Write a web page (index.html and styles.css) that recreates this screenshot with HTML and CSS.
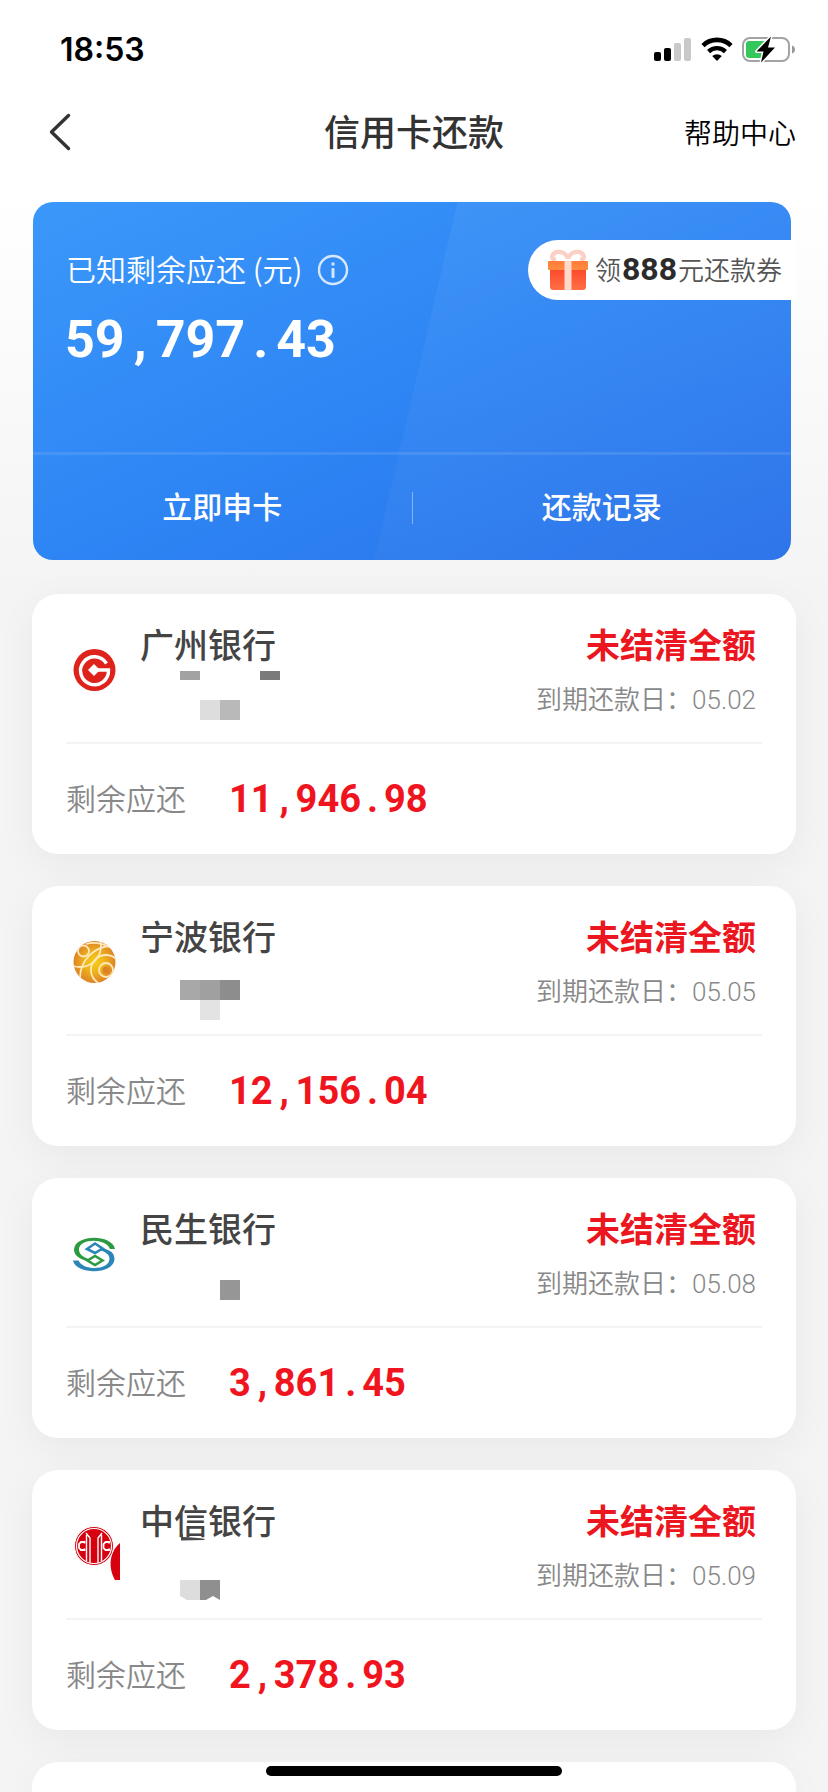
FILE: index.html
```html
<!DOCTYPE html>
<html lang="zh-CN">
<head>
<meta charset="utf-8">
<meta name="viewport" content="width=device-width, initial-scale=1">
<title>信用卡还款</title>
<link rel="stylesheet" href="styles.css">
</head>
<body>
<div class="page">
  <div class="status">
    <span class="status-time">18:53</span>
    <div class="status-icons">
      <svg width="38" height="26" viewBox="0 0 38 26" aria-hidden="true">
        <rect x="0" y="15" width="7" height="9" rx="2"/>
        <rect x="10" y="11" width="7" height="13" rx="2"/>
        <rect x="20" y="6" width="7" height="18" rx="2" fill="#c9c9c9"/>
        <rect x="30" y="1" width="7" height="23" rx="2" fill="#c9c9c9"/>
      </svg>
      <svg width="32" height="26" viewBox="0 0 32 26" aria-hidden="true">
        <path d="M2 8.6a20 20 0 0 1 28 0" fill="none" stroke="#000" stroke-width="4.6"/>
        <path d="M7.6 14.6a12 12 0 0 1 16.8 0" fill="none" stroke="#000" stroke-width="4.4"/>
        <path d="M16 24l-4.8-4.9a7 7 0 0 1 9.6 0z"/>
      </svg>
      <svg width="54" height="28" viewBox="0 0 54 28" aria-hidden="true">
        <rect x="1" y="2" width="46" height="23" rx="7" fill="none" stroke="#a3a3a3" stroke-width="2"/>
        <path d="M50 9.500c4 1 4 7 0 8z" fill="#9a9a9a"/>
        <path d="M7 5h15v17H7a3 3 0 0 1-3-3V8a3 3 0 0 1 3-3z" fill="#34c759"/>
        <path d="M29 .5L14.500 15.500h7L19 26.500l14-15h-7z" stroke="#fff" stroke-width="3" stroke-linejoin="round" paint-order="stroke"/>
      </svg>
    </div>
  </div>

  <header class="nav">
    <button class="nav-back" type="button" aria-label="返回">
      <svg width="24" height="40" viewBox="0 0 24 40" aria-hidden="true">
        <path d="M20.500 3.500L3.500 20l17 16.500" fill="none" stroke="#333" stroke-width="3.400" stroke-linecap="round" stroke-linejoin="round"/>
      </svg>
    </button>
    <h1 class="nav-title">信用卡还款</h1>
    <a class="nav-help" href="#help">帮助中心</a>
  </header>

  <section class="hero">
    <div class="hero-top">
      <span class="hero-label">已知剩余应还 (元)</span>
      <svg class="hero-info" width="32" height="32" viewBox="0 0 32 32" aria-hidden="true">
        <circle cx="16" cy="16" r="14" fill="none" stroke="#d4e7ff" stroke-width="2.400"/>
        <rect x="14.500" y="8.500" width="3" height="3" fill="#d4e7ff"/>
        <rect x="14.500" y="14" width="3" height="10" rx="1" fill="#d4e7ff"/>
      </svg>
      <a class="coupon" href="#coupon">
        <svg width="40" height="42" viewBox="0 0 40 42" aria-hidden="true">
          <defs>
            <linearGradient id="lid" x1="0" y1="0" x2="0" y2="1"><stop offset="0" stop-color="#ff7a3c"/><stop offset="1" stop-color="#ff8d3e"/></linearGradient>
            <linearGradient id="box" x1="0" y1="0" x2="0" y2="1"><stop offset="0" stop-color="#fb4a2c"/><stop offset="1" stop-color="#ff6f45"/></linearGradient>
          </defs>
          <path d="M20 9C16 1 6 1 4 8c0 2 2 3 4 3M20 9c4-8 14-8 16-1 0 2-2 3-4 3" fill="none" stroke="#fbd0c5" stroke-width="4.500"/>
          <path d="M2 20h36v18a3 3 0 0 1-3 3H5a3 3 0 0 1-3-3z" fill="url(#box)"/>
          <rect x="0" y="12" width="40" height="9" rx="1" fill="url(#lid)"/>
          <rect x="16.500" y="12" width="7" height="29" fill="#ffd9cb"/>
        </svg>
        <span class="coupon-text">领<b class="coupon-num">888</b>元还款券</span>
      </a>
    </div>
    <p class="hero-amount">59<span class="sep">,</span>797<span class="sep">.</span>43</p>
    <div class="hero-actions">
      <button class="hero-action" type="button">立即申卡</button>
      <span class="hero-split"></span>
      <button class="hero-action" type="button">还款记录</button>
    </div>
  </section>

  <main class="cards">
    <article class="card">
      <div class="card-head">
        <svg class="logo" width="56" height="56" viewBox="0 0 56 56" aria-hidden="true">
          <circle cx="28.500" cy="28" r="21" fill="#de231c"/>
          <path d="M40.500 21.500A14 14 0 1 0 42.500 28H30" fill="none" stroke="#fff" stroke-width="3.400"/>
          <path d="M28 22l6 6-6 6-6-6z" fill="#fff"/>
        </svg>
        <div class="bank">
          <h2 class="bank-name">广州银行</h2>
          <svg class="mask" width="160" height="60" viewBox="0 0 160 60" aria-hidden="true">
            <rect x="40" y="1" width="20" height="9" fill="#a2a2a2"/>
            <rect x="120" y="1" width="20" height="9" fill="#7a7a7a"/>
            <rect x="60" y="30" width="20" height="20" fill="#ddd"/>
            <rect x="80" y="30" width="20" height="20" fill="#b9b9b9"/>
          </svg>
        </div>
        <div class="due">
          <strong class="due-state">未结清全额</strong>
          <span class="due-date">到期还款日：05.02</span>
        </div>
      </div>
      <div class="card-body">
        <span class="owed-label">剩余应还</span>
        <span class="owed">11<span class="sep">,</span>946<span class="sep">.</span>98</span>
      </div>
    </article>

    <article class="card">
      <div class="card-head">
        <svg class="logo" width="56" height="56" viewBox="0 0 56 56" aria-hidden="true">
          <defs>
            <radialGradient id="nb"><stop offset="0" stop-color="#f3cf16"/><stop offset=".5" stop-color="#eeb11b"/><stop offset="1" stop-color="#dd8426"/></radialGradient>
            <clipPath id="nbc"><circle cx="28.500" cy="28" r="21"/></clipPath>
          </defs>
          <circle cx="28.500" cy="28" r="21" fill="url(#nb)"/>
          <g clip-path="url(#nbc)" fill="none" stroke="#ffe9bd" stroke-width="1.800">
            <circle cx="17.500" cy="17" r="5.500"/>
            <circle cx="14" cy="12" r="21"/>
            <circle cx="40" cy="36" r="7"/>
            <circle cx="40" cy="36" r="15"/>
            <circle cx="46" cy="44" r="32"/>
            <path d="M20 10q14-4 28 6"/>
          </g>
          <circle cx="40" cy="36" r="3.500" fill="#dc8124"/>
        </svg>
        <div class="bank">
          <h2 class="bank-name">宁波银行</h2>
          <svg class="mask" width="160" height="60" viewBox="0 0 160 60" aria-hidden="true">
            <rect x="40" y="18" width="20" height="20" fill="#a8a8a8"/>
            <rect x="60" y="18" width="20" height="20" fill="#a0a0a0"/>
            <rect x="80" y="18" width="20" height="20" fill="#8d8d8d"/>
            <rect x="60" y="38" width="20" height="20" fill="#e3e3e3"/>
          </svg>
        </div>
        <div class="due">
          <strong class="due-state">未结清全额</strong>
          <span class="due-date">到期还款日：05.05</span>
        </div>
      </div>
      <div class="card-body">
        <span class="owed-label">剩余应还</span>
        <span class="owed">12<span class="sep">,</span>156<span class="sep">.</span>04</span>
      </div>
    </article>

    <article class="card">
      <div class="card-head">
        <svg class="logo" width="56" height="56" viewBox="0 0 56 56" aria-hidden="true">
          <path d="M49 23C46 8 9 8 8 23.500 8 31 16 33.500 22 35.500l1.500-2C18 31 13 29 13 23.500 13 12 40 12 44 23z" fill="#2c9a41"/>
          <path d="M7 34.500C10 49 48 49 48.500 33 48.500 25 41 23.500 35 21.500l-1.500 2.500c6 2 10 4 10 9C43 44.500 17 45 12.500 34.500z" fill="#2b86b8"/>
          <path d="M21 23l8-5.500 7.500 5L29 27z" fill="none" stroke="#2b86b8" stroke-width="2.600"/>
          <path d="M21.500 34.500L29 30l7.500 4.500L29 39z" fill="none" stroke="#2c9a41" stroke-width="2.600"/>
        </svg>
        <div class="bank">
          <h2 class="bank-name">民生银行</h2>
          <svg class="mask" width="160" height="60" viewBox="0 0 160 60" aria-hidden="true">
            <rect x="80" y="26" width="20" height="20" fill="#969696"/>
          </svg>
        </div>
        <div class="due">
          <strong class="due-state">未结清全额</strong>
          <span class="due-date">到期还款日：05.08</span>
        </div>
      </div>
      <div class="card-body">
        <span class="owed-label">剩余应还</span>
        <span class="owed">3<span class="sep">,</span>861<span class="sep">.</span>45</span>
      </div>
    </article>

    <article class="card">
      <div class="card-head">
        <svg class="logo" width="56" height="56" viewBox="0 0 56 56" aria-hidden="true">
          <path d="M54 25v37h-5c-7-12-6-28 5-37z" fill="#d7000f"/>
          <circle cx="28" cy="28" r="19.500" fill="#d7000f" stroke="#fff" stroke-width="1"/>
          <circle cx="28" cy="28" r="17.500" fill="none" stroke="#fff" stroke-width="1.200"/>
          <path d="M18.500 25.500v-1.500h-3.500l-2 2v4l2 2h3.500v-1.500M43 25.500v-1.500h-3.500l-2 2v4l2 2H43v-1.500" fill="none" stroke="#fff" stroke-width="1.800"/>
          <path d="M20.500 43V17M24 45V20l-4-5M32 45V20l4-5M35.500 43V17" fill="none" stroke="#fff" stroke-width="1.400"/>
        </svg>
        <div class="bank">
          <h2 class="bank-name">中信银行</h2>
          <svg class="mask" width="160" height="60" viewBox="0 0 160 60" aria-hidden="true">
            <path d="M41-12h2v3c8 0 16 1 22 2l-1 1-23 .5z" fill="#4a4a4a"/>
            <path d="M40 34h20v20H47l-7-4z" fill="#ddd"/>
            <path d="M60 34h20v20l-7-4-7 4h-6z" fill="#8f8f8f"/>
          </svg>
        </div>
        <div class="due">
          <strong class="due-state">未结清全额</strong>
          <span class="due-date">到期还款日：05.09</span>
        </div>
      </div>
      <div class="card-body">
        <span class="owed-label">剩余应还</span>
        <span class="owed">2<span class="sep">,</span>378<span class="sep">.</span>93</span>
      </div>
    </article>

    <div class="card card-next"></div>
  </main>
  <div class="home-bar"></div>
</div>
</body>
</html>
```
FILE: styles.css
```css
* {
  box-sizing: border-box;
}

body {
  margin: 0;
  background: #f4f4f4;
  font-family: "Liberation Sans", "Noto Sans CJK SC", sans-serif;
  color: #333;
}

h1,
h2,
p {
  margin: 0;
}

button {
  padding: 0;
  border: 0;
  background: none;
  color: inherit;
  font: inherit;
}

a {
  color: inherit;
  text-decoration: none;
}

svg {
  display: block;
  flex: none;
}

.page {
  display: flex;
  flex-direction: column;
  min-height: 100vh;
  overflow: hidden;
  background: linear-gradient(#fff 190px, #f4f4f4 590px);
}

.status {
  display: flex;
  align-items: center;
  justify-content: space-between;
  height: 100px;
  padding: 0 32px 0 60px;
}

.status-time {
  font: 600 32px/40px Inter, sans-serif;
  color: #000;
}

.status-icons {
  display: flex;
  align-items: center;
  gap: 9px;
}

.nav {
  display: grid;
  grid-template-columns: 1fr auto 1fr;
  align-items: center;
  height: 64px;
  padding: 0 32px 0 48px;
}

.nav-back {
  justify-self: start;
}

.nav-title {
  margin-right: 16px;
  padding-bottom: 4px;
  font: 500 36px/48px "Noto Sans CJK SC", sans-serif;
}

.nav-help {
  justify-self: end;
  font: 350 28px/40px "Noto Sans CJK SC", sans-serif;
  color: #000;
}

.hero {
  position: relative;
  margin: 38px 37px 0 33px;
  padding-top: 38px;
  border-radius: 20px;
  background: linear-gradient(155deg, #3b98fa 0%, #2e85f4 50%, #2a72e9 100%);
  color: #fff;
}

.hero::before {
  content: "";
  position: absolute;
  inset: 0;
  border-radius: inherit;
  background: linear-gradient(170deg, rgba(255, 255, 255, 0.06), rgba(255, 255, 255, 0.02));
  clip-path: polygon(56% 0, 100% 0, 100% 100%, 45% 100%);
}

.hero-top {
  position: relative;
  display: flex;
  align-items: center;
  height: 60px;
  padding-left: 33px;
}

.hero-label {
  padding-bottom: 4px;
  font: 350 30px/40px "Noto Sans CJK SC", sans-serif;
}

.hero-info {
  margin-left: 14px;
}

.coupon {
  display: flex;
  align-items: center;
  gap: 7px;
  height: 60px;
  margin: 0 -5px 0 auto;
  padding: 0 14px 0 20px;
  border-radius: 30px 0 0 30px;
  background: #fff;
}

.coupon-text {
  padding-bottom: 2px;
  font: 350 26px/40px "Noto Sans CJK SC", sans-serif;
  color: #555;
}

.coupon-num {
  margin: 0 1px;
  font: 700 32px/40px Roboto, sans-serif;
  color: #2b2b2b;
}

.hero-amount {
  position: relative;
  margin-top: 10px;
  padding-left: 32px;
  font: 700 52px/60px Roboto, sans-serif;
}

.sep {
  display: inline-block;
  width: 31px;
  text-align: center;
}

.hero-actions {
  position: relative;
  display: flex;
  align-items: center;
  height: 108px;
  margin-top: 82px;
  border-top: 3px solid rgba(255, 255, 255, 0.1);
}

.hero-action {
  flex: 1;
  height: 100%;
  padding-bottom: 6px;
  font: 500 30px/40px "Noto Sans CJK SC", sans-serif;
}

.hero-split {
  width: 1px;
  height: 32px;
  background: rgba(255, 255, 255, 0.4);
}

.cards {
  display: flex;
  flex: 1;
  flex-direction: column;
  gap: 32px;
  margin-top: 34px;
  padding: 0 32px;
}

.card {
  padding: 0 34px;
  border-radius: 26px;
  background: #fff;
  box-shadow: 0 10px 40px rgba(0, 0, 0, 0.05);
}

.card-next {
  flex: 1;
  min-height: 30px;
  border-radius: 26px 26px 0 0;
}

.card-head {
  display: flex;
  padding: 26px 6px 12px 0;
  border-bottom: 2px solid #f4f4f4;
}

.logo {
  margin: 22px 18px 0 0;
  overflow: visible;
}

.bank-name {
  margin-bottom: 2px;
  font: 500 34px/48px "Noto Sans CJK SC", sans-serif;
  color: #444;
}

.mask {
  overflow: visible;
}

.due {
  display: flex;
  flex-direction: column;
  align-items: flex-end;
  gap: 12px;
  margin-left: auto;
}

.due-state {
  font: 700 34px/48px "Noto Sans CJK SC", sans-serif;
  color: #ec1620;
}

.due-date {
  font: 350 26px/40px Roboto, "Noto Sans CJK SC", sans-serif;
  color: #888;
}

.card-body {
  display: flex;
  align-items: center;
  gap: 43px;
  height: 110px;
}

.owed-label {
  padding-bottom: 4px;
  font: 350 30px/40px "Noto Sans CJK SC", sans-serif;
  color: #888;
}

.owed {
  font: 700 38px/48px Roboto, sans-serif;
  color: #f0141e;
}

.owed .sep {
  width: 23px;
}

.home-bar {
  position: fixed;
  bottom: 16px;
  left: 50%;
  width: 296px;
  height: 10px;
  margin-left: -148px;
  border-radius: 5px;
  background: #000;
}
```
